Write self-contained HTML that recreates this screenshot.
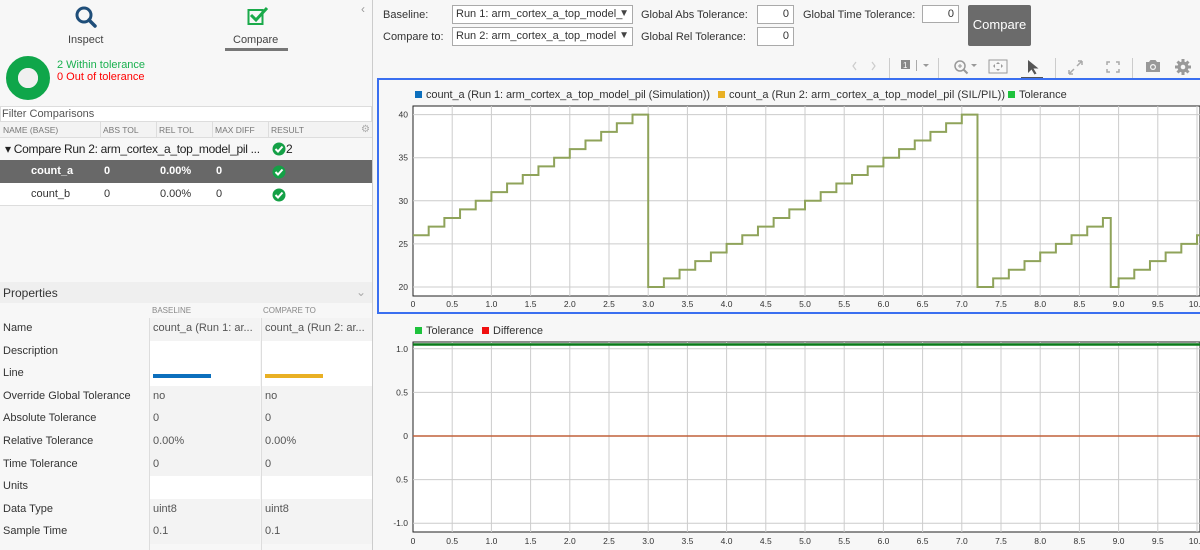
<!DOCTYPE html>
<html><head><meta charset="utf-8"><style>
*{box-sizing:border-box;margin:0;padding:0}
body{width:1200px;height:550px;overflow:hidden;background:#f7f7f7;font-family:"Liberation Sans",sans-serif;font-size:11px;color:#333;position:relative}
.a{position:absolute;white-space:nowrap}
.sel{position:absolute;height:19px;border:1px solid #aaa;background:#fff;font-size:11px;padding:2px 3px;width:181px}
.sel:after{content:"▼";position:absolute;right:3px;top:2px;font-size:10px;color:#444}
.inp{position:absolute;height:19px;border:1px solid #aaa;background:#fff;text-align:right;padding:2px 4px;font-size:11px}
.row{position:absolute;left:0;width:372px}
.c{position:absolute;top:0;white-space:nowrap}
</style></head><body>
<div class="a" style="left:0;top:0;width:373px;height:550px;background:#f7f7f7;border-right:1px solid #ccc"></div>
<svg class="a" style="left:74px;top:5px" width="24" height="24" viewBox="0 0 24 24"><circle cx="10" cy="10" r="7" fill="none" stroke="#1f4e79" stroke-width="3"/><path d="M15 15l6 6" stroke="#1f4e79" stroke-width="3.5" stroke-linecap="round"/></svg>
<div class="a" style="left:68px;top:34px;font-size:11px;color:#444">Inspect</div>
<svg class="a" style="left:247px;top:6px" width="22" height="20" viewBox="0 0 22 20"><rect x="1.5" y="4" width="14" height="14" fill="none" stroke="#1aaa4a" stroke-width="2"/><path d="M4 9l5 5 11-12" fill="none" stroke="#1aaa4a" stroke-width="3"/></svg>
<div class="a" style="left:233px;top:34px;font-size:11px;color:#444">Compare</div>
<div class="a" style="left:225px;top:48px;width:63px;height:3px;background:#777"></div>
<div class="a" style="left:361px;top:2px;color:#999;font-size:12px">‹</div>
<svg class="a" style="left:6px;top:56px" width="44" height="44"><circle cx="22" cy="22" r="16" fill="none" stroke="#0fa64a" stroke-width="12"/><circle cx="22" cy="22" r="10" fill="#f0f0f0"/></svg>
<div class="a" style="left:57px;top:59px;color:#1ab04f;font-size:11px">2 Within tolerance</div>
<div class="a" style="left:57px;top:71px;color:#f00;font-size:11px">0 Out of tolerance</div>
<div class="a" style="left:0;top:106px;width:372px;height:16px;background:#fff;border:1px solid #ddd;color:#555;padding:1px 1px;font-size:11px">Filter Comparisons</div>
<div class="row" style="top:122px;height:16px;background:#f3f3f3;border-bottom:1px solid #ddd;font-size:8.5px;color:#777">
<span class="c" style="left:3px;top:3px">NAME (BASE)</span><span class="c" style="left:103px;top:3px">ABS TOL</span><span class="c" style="left:159px;top:3px">REL TOL</span><span class="c" style="left:215px;top:3px">MAX DIFF</span><span class="c" style="left:271px;top:3px">RESULT</span><span class="c" style="left:361px;top:2px;color:#aaa;font-size:10px">⚙</span></div>
<div class="a" style="left:100px;top:122px;width:1px;height:84px;background:#ddd"></div>
<div class="a" style="left:156px;top:122px;width:1px;height:84px;background:#ddd"></div>
<div class="a" style="left:212px;top:122px;width:1px;height:84px;background:#ddd"></div>
<div class="a" style="left:268px;top:122px;width:1px;height:84px;background:#ddd"></div>
<div class="row" style="top:138px;height:22px;background:#f7f7f7;font-size:12px;color:#222"><span class="c" style="left:5px;top:4px;background:#f7f7f7;width:263px;overflow:hidden;letter-spacing:-0.3px">▾ Compare Run 2: arm_cortex_a_top_model_pil ...</span>
<svg class="c" style="left:272px;top:4px" width="14" height="14"><circle cx="7" cy="7" r="6.5" fill="#14a046"/><path d="M3.5 7l2.5 2.5 4.5-5" stroke="#fff" stroke-width="2" fill="none"/></svg><span class="c" style="left:286px;top:4px">2</span></div>
<div class="row" style="top:160px;height:23px;background:#686868;color:#fff;font-weight:bold;font-size:11px"><span class="c" style="left:31px;top:5px">count_a</span><span class="c" style="left:104px;top:5px">0</span><span class="c" style="left:160px;top:5px">0.00%</span><span class="c" style="left:216px;top:5px">0</span>
<svg class="c" style="left:272px;top:5px" width="14" height="14"><circle cx="7" cy="7" r="6.5" fill="#14a046"/><path d="M3.5 7l2.5 2.5 4.5-5" stroke="#fff" stroke-width="2" fill="none"/></svg></div>
<div class="row" style="top:183px;height:23px;background:#fff;border-bottom:1px solid #ddd;font-size:11px"><span class="c" style="left:31px;top:5px">count_b</span><span class="c" style="left:104px;top:5px">0</span><span class="c" style="left:160px;top:5px">0.00%</span><span class="c" style="left:216px;top:5px">0</span>
<svg class="c" style="left:272px;top:5px" width="14" height="14"><circle cx="7" cy="7" r="6.5" fill="#14a046"/><path d="M3.5 7l2.5 2.5 4.5-5" stroke="#fff" stroke-width="2" fill="none"/></svg></div>
<div class="a" style="left:0;top:282px;width:372px;height:21px;background:#efefef;font-size:12px;color:#333;padding:4px 3px">Properties<span style="position:absolute;right:6px;top:3px;color:#aaa">⌄</span></div>
<div class="a" style="left:152px;top:306px;font-size:8px;color:#888">BASELINE</div>
<div class="a" style="left:263px;top:306px;font-size:8px;color:#888">COMPARE TO</div>
<div class="a" style="left:149px;top:318px;width:1px;height:232px;background:#ddd"></div>
<div class="a" style="left:261px;top:318px;width:1px;height:232px;background:#ddd"></div>
<div id="props"></div>
<div class="a" style="left:383px;top:9px">Baseline:</div>
<div class="a" style="left:383px;top:31px">Compare to:</div>
<div class="sel" style="left:452px;top:5px">Run 1: arm_cortex_a_top_model_</div>
<div class="sel" style="left:452px;top:27px">Run 2: arm_cortex_a_top_model</div>
<div class="a" style="left:641px;top:9px">Global Abs Tolerance:</div>
<div class="a" style="left:641px;top:31px">Global Rel Tolerance:</div>
<div class="inp" style="left:757px;top:5px;width:37px">0</div>
<div class="inp" style="left:757px;top:27px;width:37px">0</div>
<div class="a" style="left:803px;top:9px">Global Time Tolerance:</div>
<div class="inp" style="left:922px;top:5px;width:37px;height:18px">0</div>
<div class="a" style="left:968px;top:5px;width:63px;height:41px;background:#6b6b6b;border-radius:2px;color:#fff;font-size:13px;text-align:center;line-height:40px">Compare</div>
<svg class="a" style="left:840px;top:52px" width="360" height="26" viewBox="0 0 360 26">
<g stroke="#ccc" fill="none" stroke-width="1.2"><path d="M16 10l-3 4 3 4M32 10l3 4-3 4"/></g>
<g fill="#ccc"><rect x="49" y="6" width="1" height="22"/><rect x="98" y="6" width="1" height="22"/><rect x="215" y="6" width="1" height="22"/><rect x="292" y="6" width="1" height="22"/></g>
<rect x="61" y="8" width="9" height="9" fill="#888"/><text x="63" y="16" font-size="8" fill="#fff" font-family="Liberation Sans">1</text><rect x="76" y="8" width="1" height="11" fill="#aaa"/><path d="M83 12h6l-3 3z" fill="#999"/>
<circle cx="120" cy="14" r="5" fill="none" stroke="#999" stroke-width="1.5"/><path d="M123.5 17.5l4 4" stroke="#999" stroke-width="2"/><path d="M118 14h4M120 12v4" stroke="#999"/><path d="M131 12h6l-3 3z" fill="#999"/>
<rect x="149" y="8" width="18" height="13" fill="none" stroke="#999"/><path d="M153 14l2-2v4zM163 14l-2-2v4zM158 10l-2 2h4zM158 19l-2-2h4z" fill="#999"/>
<path d="M188 8v13l3.5-3.5 3 5 2-1-3-5h5z" fill="#555"/><rect x="181" y="25" width="22" height="2" fill="#555"/>
<path d="M229 22l5-5M242 9l-5 5M229 22v-4M229 22h4M242 9v4M242 9h-4" stroke="#aaa" stroke-width="1.5" fill="none"/>
<path d="M270 10h-3v3M276 10h3v3M270 20h-3v-3M276 20h3v-3" stroke="#aaa" stroke-width="1.5" fill="none"/>
<path d="M306 10h3l1.5-2h5l1.5 2h3v10h-14z" fill="#999"/><circle cx="313" cy="15" r="3" fill="#f7f7f7"/><circle cx="313" cy="15" r="1.8" fill="#999"/>
<circle cx="343" cy="15" r="5.5" fill="#999"/><g stroke="#999" stroke-width="3"><path d="M343 7v16M335 15h16M337.5 9.5l11 11M348.5 9.5l-11 11"/></g><circle cx="343" cy="15" r="2.3" fill="#f7f7f7"/>
</svg>
<div class="a" style="left:377px;top:78px;width:823px;height:236px;border:2px solid #3a6ff0;border-right:none;background:#f7f7f7"></div>
<svg class="a" style="left:379px;top:80px" width="821" height="232" id="p1"></svg>
<svg class="a" style="left:375px;top:316px" width="825" height="234" id="p2"></svg>
<script>
var rows=[["Name","count_a (Run 1: ar...","count_a (Run 2: ar...",1],["Description","","",0],["Line","L1","L2",0],["Override Global Tolerance","no","no",1],["Absolute Tolerance","0","0",1],["Relative Tolerance","0.00%","0.00%",1],["Time Tolerance","0","0",1],["Units","","",0],["Data Type","uint8","uint8",1],["Sample Time","0.1","0.1",1]];
var h="";rows.forEach(function(r,i){var t=318+i*22.6;var bg=r[3]?"#f3f3f3":"#fff";
h+='<div class="a" style="left:0;top:'+t+'px;width:149px;height:22.6px;font-size:11px;color:#333;padding:4px 3px">'+r[0]+'</div>';
[[150,r[1]],[262,r[2]]].forEach(function(c,j){var inner=c[1]=="L1"?'<div style="margin-top:7px;width:58px;height:4px;background:#0c6fbd"></div>':c[1]=="L2"?'<div style="margin-top:7px;width:58px;height:4px;background:#e9b024"></div>':c[1];
h+='<div class="a" style="left:'+c[0]+'px;top:'+t+'px;width:110px;height:22.6px;background:'+bg+';font-size:11px;color:#555;padding:4px 3px;overflow:hidden">'+inner+'</div>';});});
document.getElementById("props").innerHTML=h;
var X0=413-379,S=78.4,Y=function(v){return 287-80-(v-20)*8.62};
var s='<rect x="'+X0+'" y="26" width="'+(821-X0)+'" height="190" fill="#fff" stroke="#222"/>';
for(var k=1;k<21;k++){var x=X0+k*0.5*S;s+='<line x1="'+x+'" y1="26" x2="'+x+'" y2="216" stroke="#ccc"/>';}
[20,25,30,35,40].forEach(function(v){var y=Y(v);s+='<line x1="'+X0+'" y1="'+y+'" x2="821" y2="'+y+'" stroke="#ccc"/><text x="'+(X0-5)+'" y="'+(y+3)+'" font-size="8.5" text-anchor="end" fill="#333">'+v+'</text>';});
for(var k=0;k<21;k++){var x=X0+k*0.5*S;s+='<text x="'+x+'" y="227" font-size="8.5" text-anchor="middle" fill="#333">'+(k==0?"0":(k/2).toFixed(1))+'</text>';}
var d="M"+X0+","+Y(26);
function stepTo(tt,vv){d+=" H"+(X0+tt*S)+" V"+Y(vv);}
for(var j=1;j<=14;j++)stepTo(j*0.2,26+j);stepTo(3.0,20);
for(var j=1;j<=20;j++)stepTo(3+j*0.2,20+j);stepTo(7.2,20);
for(var j=1;j<=8;j++)stepTo(7.2+j*0.2,20+j);stepTo(8.9,20);
for(var j=0;j<=5;j++)stepTo(9.0+j*0.2,21+j);d+=" H821";
s+='<path d="'+d+'" fill="none" stroke="#8fa35a" stroke-width="2"/>';
s+='<rect x="36" y="11" width="7" height="7" fill="#0c6fbd"/><text x="47" y="18" font-size="11" fill="#333" textLength="284">count_a (Run 1: arm_cortex_a_top_model_pil (Simulation))</text>';
s+='<rect x="339" y="11" width="7" height="7" fill="#e9b024"/><text x="350" y="18" font-size="11" fill="#333" textLength="276">count_a (Run 2: arm_cortex_a_top_model_pil (SIL/PIL))</text>';
s+='<rect x="629" y="11" width="7" height="7" fill="#1ec23c"/><text x="640" y="18" font-size="11" fill="#333">Tolerance</text>';
document.getElementById("p1").innerHTML=s;
var B0=413-375,Y2=function(v){return 436-316-v*87.2};
var s2='<rect x="'+B0+'" y="26" width="'+(825-B0)+'" height="190" fill="#fff" stroke="#222"/>';
for(var k=1;k<21;k++){var x=B0+k*0.5*S;s2+='<line x1="'+x+'" y1="26" x2="'+x+'" y2="216" stroke="#ccc"/>';}
[[1,"1.0"],[0.5,"0.5"],[0,"0"],[-0.5,"0.5"],[-1,"-1.0"]].forEach(function(p){var y=Y2(p[0]);s2+='<line x1="'+B0+'" y1="'+y+'" x2="825" y2="'+y+'" stroke="#ccc"/><text x="'+(B0-5)+'" y="'+(y+3)+'" font-size="8.5" text-anchor="end" fill="#333">'+p[1]+'</text>';});
for(var k=0;k<21;k++){var x=B0+k*0.5*S;s2+='<text x="'+x+'" y="228" font-size="8.5" text-anchor="middle" fill="#333">'+(k==0?"0":(k/2).toFixed(1))+'</text>';}
s2+='<line x1="'+B0+'" y1="28.5" x2="825" y2="28.5" stroke="#0a7a1a" stroke-width="2.5"/>';
s2+='<line x1="'+B0+'" y1="'+Y2(0)+'" x2="825" y2="'+Y2(0)+'" stroke="#c0603a" stroke-width="1.5"/>';
s2+='<rect x="40" y="11" width="7" height="7" fill="#1ec23c"/><text x="51" y="18" font-size="11" fill="#333">Tolerance</text>';
s2+='<rect x="107" y="11" width="7" height="7" fill="#f01010"/><text x="118" y="18" font-size="11" fill="#333">Difference</text>';
document.getElementById("p2").innerHTML=s2;
</script>
</body></html>
